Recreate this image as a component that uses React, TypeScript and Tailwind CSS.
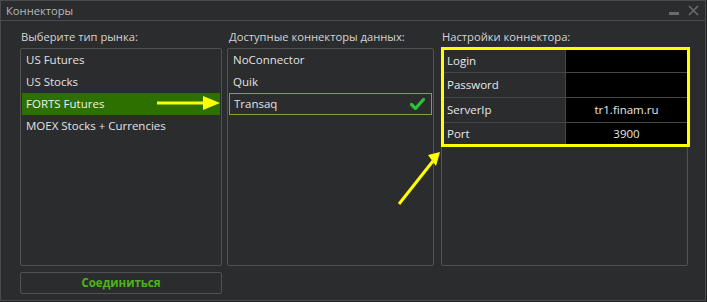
const MARKETS = ['US Futures', 'US Stocks', 'FORTS Futures', 'MOEX Stocks + Currencies'];
const CONNECTORS = ['NoConnector', 'Quik', 'Transaq'];
const SETTINGS = [
  { k: 'Login', v: '', h: 'h-[22px]' },
  { k: 'Password', v: '', h: 'h-[25px]' },
  { k: 'ServerIp', v: 'tr1.finam.ru', h: 'h-[25px]' },
  { k: 'Port', v: '3900', h: 'h-[22px]' },
];

const font = { fontFamily: '"Open Sans", "Noto Sans", sans-serif' };

const App = () => (
  <div className="w-[707px] h-[302px] bg-[#1e1f20] relative" style={font}>
    <div className="w-[706px] h-[301px] bg-[#2b2c2e] border border-[#4a4b4d] flex flex-col">
      {/* title */}
      <div className="h-[20px] shrink-0 border-b border-[#4a4b4d] flex items-center justify-between pl-[5px] pr-[6px]">
        <span className="text-[11.2px] text-[#b8b8b8] leading-none">Коннекторы</span>
        <div className="flex items-center gap-[9px]">
          <div className="w-[10px] h-[3px] bg-[#6a6b6d] mt-[5px]" />
          <svg width="11" height="11" viewBox="0 0 11 11"><path d="M1 1L10 10M10 1L1 10" stroke="#6a6b6d" strokeWidth="1.6" /></svg>
        </div>
      </div>

      <div className="flex pl-[19px] pt-[8px] gap-[5px] text-[11.5px] text-[#e2e2e2]">
        {/* left */}
        <div className="w-[202px] flex flex-col">
          <div className="h-[19px] text-[11.2px] text-[#d4d4d4] leading-[16px] pl-[1px]">Выберите тип рынка:</div>
          <div className="h-[218px] border border-[#505153] rounded-[2px] px-[1px]">
            {MARKETS.map(m => (
              <div key={m} className={`h-[22px] flex items-center px-[4px] ${m === 'FORTS Futures' ? 'bg-[#2d7000] text-[#f0f0f0]' : ''}`}>{m}</div>
            ))}
          </div>
          <div className="mt-[6px] h-[22px] border border-[#505153] rounded-[2px] flex items-center justify-center text-[#4cb51a] font-bold text-[11.5px]">Соединиться</div>
        </div>

        {/* middle */}
        <div className="w-[207px] flex flex-col">
          <div className="h-[19px] text-[11.2px] text-[#d4d4d4] leading-[16px] pl-[2px]">Доступные коннекторы данных:</div>
          <div className="h-[218px] border border-[#505153] rounded-[2px] px-[1px]">
            {CONNECTORS.map(c => (
              <div key={c} className={`h-[22px] flex items-center justify-between pl-[4px] pr-[6px] ${c === 'Transaq' ? 'border border-[#7fa52a] bg-[#2b2c2e]' : ''}`}>
                <span>{c}</span>
                {c === 'Transaq' && (
                  <svg width="15" height="12" viewBox="0 0 15 12">
                    <path d="M1.5 6.5L5.5 10.5L13.5 1.5" fill="none" stroke="#2fbf3a" strokeWidth="3.2" strokeLinecap="round" strokeLinejoin="round" />
                  </svg>
                )}
              </div>
            ))}
          </div>
        </div>

        {/* right */}
        <div className="w-[247px] ml-[2px] flex flex-col">
          <div className="h-[19px] text-[11.2px] text-[#d4d4d4] leading-[16px] pl-[1px]">Настройки коннектора:</div>
          <div className="h-[218px] border border-[#505153] rounded-[2px] relative">
            <div className="absolute left-[-1px] top-[-2px] w-[249px] h-[100px] border-[3px] border-[#ffff00] bg-[#2b2c2e] flex flex-col">
              {SETTINGS.map((s, i) => (
                <div key={s.k} className={`flex ${s.h} ${i === 0 ? '' : 'border-t border-[#454648]'}`}>
                  <div className="w-[122px] flex items-center pl-[3px] border-r border-[#454648] text-[#e8e8e8]">{s.k}</div>
                  <div className="flex-1 bg-black flex items-center justify-center text-[#e8e8e8]">{s.v}</div>
                </div>
              ))}
            </div>
          </div>
        </div>
      </div>
    </div>

    {/* arrows */}
    <svg className="absolute left-0 top-0 pointer-events-none" width="707" height="302">
      <line x1="157" y1="103" x2="205" y2="103" stroke="#ffff00" strokeWidth="3" />
      <polygon points="203,96 220,103 203,110" fill="#ffff00" />
      <line x1="399" y1="204" x2="433" y2="161" stroke="#ffff00" strokeWidth="3" />
      <polygon points="428,155 440,152 436,166" fill="#ffff00" />
    </svg>
  </div>
);

export default App;
